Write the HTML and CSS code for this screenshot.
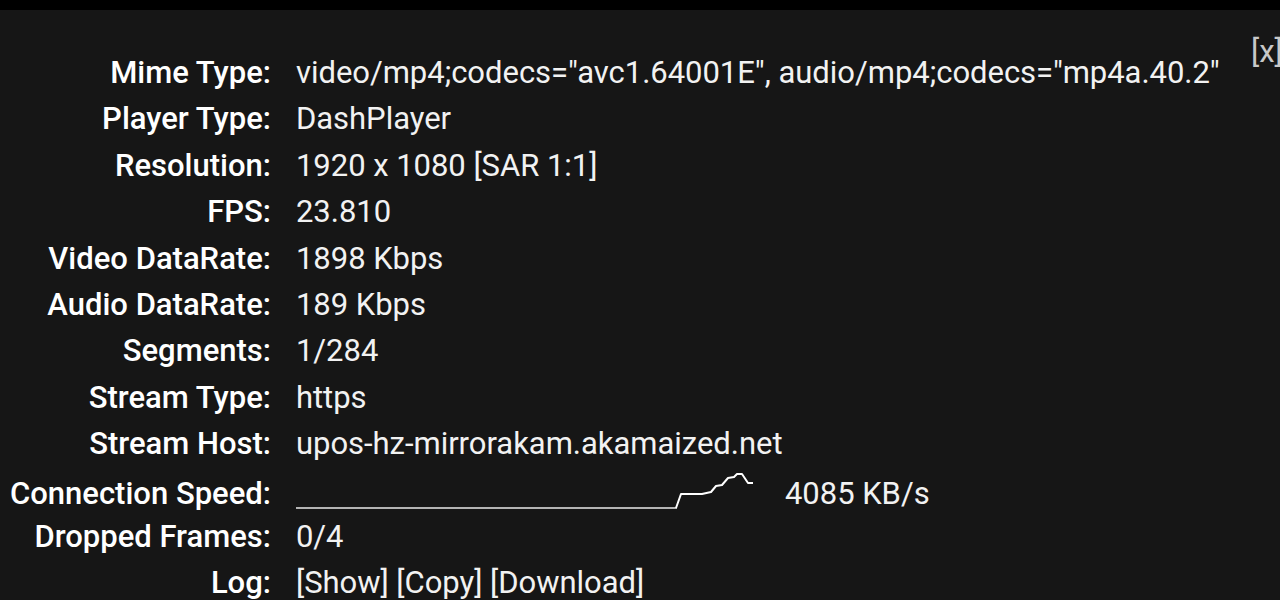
FILE: index.html
```html
<!DOCTYPE html>
<html>
<head>
<meta charset="utf-8">
<link rel="stylesheet" href="styles.css">
</head>
<body>
<div class="topbar"></div>
<div class="panel">
  <span class="close">[x]</span>
  <div class="stats">
    <div class="label">Mime Type:</div><div class="value">video/mp4;codecs="avc1.64001E", audio/mp4;codecs="mp4a.40.2"</div>
    <div class="label">Player Type:</div><div class="value">DashPlayer</div>
    <div class="label">Resolution:</div><div class="value">1920 x 1080 [SAR 1:1]</div>
    <div class="label">FPS:</div><div class="value">23.810</div>
    <div class="label">Video DataRate:</div><div class="value">1898 Kbps</div>
    <div class="label">Audio DataRate:</div><div class="value">189 Kbps</div>
    <div class="label">Segments:</div><div class="value">1/284</div>
    <div class="label">Stream Type:</div><div class="value">https</div>
    <div class="label">Stream Host:</div><div class="value">upos-hz-mirrorakam.akamaized.net</div>
    <div class="label label-speed">Connection Speed:</div>
    <div class="value value-speed">
      <svg class="spark" width="460" height="40" viewBox="0 0 460 40">
        <polyline points="0,37 381,37" fill="none" stroke="#b4b4b4" stroke-width="2"/>
        <polyline points="380,37 385,23 406,23 415,21 420,15 426,14 432,7 438,6 441,3 446,3 452,12 457,12" fill="none" stroke="#ffffff" stroke-width="2" stroke-linejoin="round"/>
      </svg>
      <span class="speed">4085 KB/s</span>
    </div>
    <div class="label">Dropped Frames:</div><div class="value">0/4</div>
    <div class="label">Log:</div><div class="value">[Show] [Copy] [Download]</div>
  </div>
</div>
</body>
</html>
```
FILE: styles.css
```css
html, body {
  margin: 0;
  padding: 0;
  background: #161616;
  overflow: hidden;
}
body {
  font-family: Roboto, "Liberation Sans", sans-serif;
  color: #f2f2f2;
  font-size: 31px;
}
.topbar {
  height: 10px;
  background: #000;
}
.panel {
  position: relative;
  padding: 40px 0 0 10px;
}
.close {
  position: absolute;
  top: 26px;
  left: 1251px;
  color: #c8c8c8;
  font-size: 31px;
  line-height: 32px;
  white-space: nowrap;
}
.stats {
  display: grid;
  grid-template-columns: max-content 1fr;
  grid-auto-rows: 46.4px;
  column-gap: 25px;
}
.label {
  font-weight: 500;
  text-align: right;
  line-height: 46.4px;
  color: #ffffff;
}
.value {
  line-height: 46.4px;
  white-space: nowrap;
  letter-spacing: -0.03px;
}
.label-speed {
  line-height: 32px;
  padding-top: 10.7px;
}
.value-speed {
  display: flex;
  align-items: flex-start;
  gap: 29px;
}
.spark {
  display: block;
  margin-top: 3px;
}
.speed {
  line-height: 32px;
  padding-top: 10.7px;
}
```
